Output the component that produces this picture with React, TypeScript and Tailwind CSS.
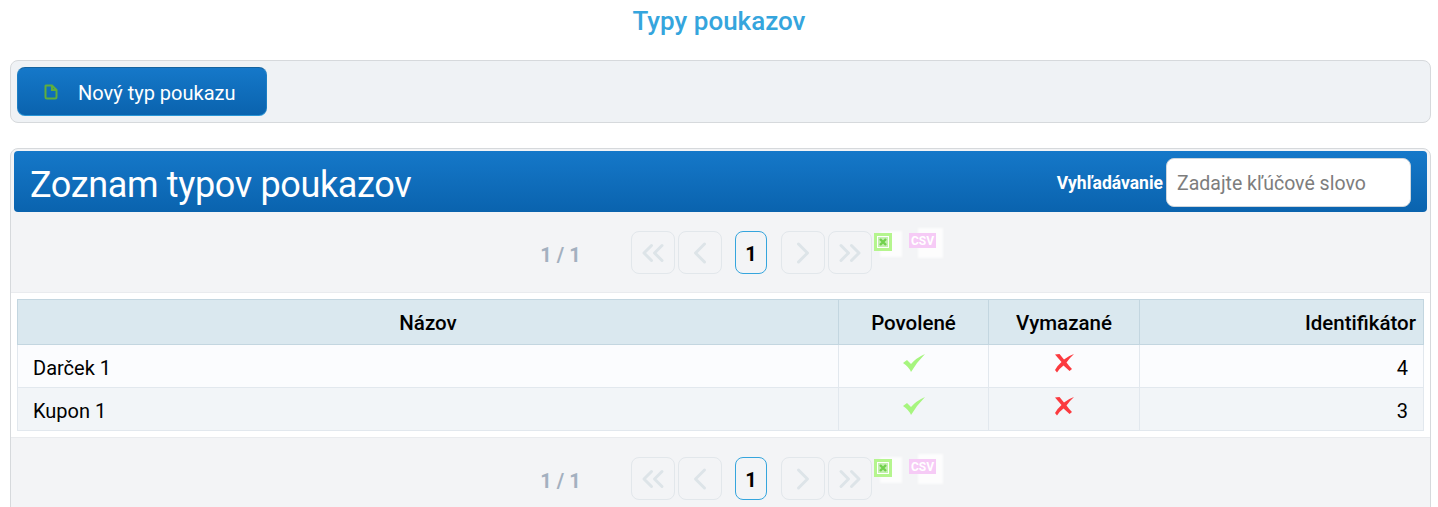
import { ChevronLeft, ChevronRight, ChevronsLeft, ChevronsRight } from "lucide-react";

function PagerButton({ children }: { children: React.ReactNode }) {
  return (
    <div className="flex h-[43px] w-[44px] items-center justify-center rounded-lg border border-[#e2e7eb] text-[#dde4e8]">
      {children}
    </div>
  );
}

function Pager() {
  return (
    <div className="flex h-[43px] items-start">
      <div className="ml-[516px] flex h-[43px] w-[61px] items-center justify-center pt-1 text-[20px] font-bold text-[#a3b0bf]">
        1 / 1
      </div>
      <div className="ml-[40px] flex gap-[3px]">
        <PagerButton><ChevronsLeft size={36} strokeWidth={2} /></PagerButton>
        <PagerButton><ChevronLeft size={36} strokeWidth={2} /></PagerButton>
      </div>
      <div className="ml-[13px] flex h-[43px] w-[32px] items-center justify-center rounded-lg border border-[#35a5dd] pt-0.5 text-[20px] font-bold text-black">
        1
      </div>
      <div className="ml-[14px] flex gap-[3px]">
        <PagerButton><ChevronRight size={36} strokeWidth={2} /></PagerButton>
        <PagerButton><ChevronsRight size={36} strokeWidth={2} /></PagerButton>
      </div>
      {/* export icons */}
      <div className="relative h-[30px] w-[72px]">
        <div className="absolute left-[8px] top-0 h-[26px] w-[22px] bg-white/80 blur-[1px]" />
        <div className="absolute left-[46px] top-[-3px] h-[30px] w-[25px] bg-white/80 blur-[1px]" />
        <div className="absolute left-[2px] top-[2px] flex h-[18px] w-[18px] items-center justify-center border-[3px] border-[#b5f58e] bg-white">
          <svg width="10" height="10" viewBox="0 0 10 10" className="blur-[0.4px]">
            <rect width="10" height="10" fill="#c4efb0" />
            <path d="M2 2 L8 8 M8 2 L2 8" stroke="#72d14e" strokeWidth="2.4" />
          </svg>
        </div>
        <div className="absolute left-[37px] top-[2px] flex h-[15px] w-[27px] items-center justify-center bg-[#f6cbf6] text-[12px] font-bold leading-none text-white">
          CSV
        </div>
      </div>
    </div>
  );
}

function Check() {
  return (
    <svg width="22" height="18" viewBox="0 0 22 18" className="blur-[0.5px]">
      <path d="M0 9 L4 6 L8 10 Q13 4 22 0 Q14 8 8 18 Q6 13 0 9 Z" fill="#a6f57e" />
    </svg>
  );
}

function Cross() {
  return (
    <svg width="20" height="20" viewBox="0 0 20 20" className="blur-[0.5px]">
      <path d="M1 1.5 L5.5 1 L10 6.5 Q14 3 20 1 Q15 5.5 12.5 9.5 Q15 13 18 16 L15.5 18 L9.5 12.5 Q6 15 3 19.5 L1 17 Q4 12 7.5 9 Q4 5 1 1.5 Z" fill="#fb3a3f" />
    </svg>
  );
}

const rows = [
  { name: "Darček 1", id: 4 },
  { name: "Kupon 1", id: 3 },
];

export default function App() {
  return (
    <main className="h-[507px] overflow-hidden bg-white font-['Roboto',sans-serif] text-black">
      <h1 className="flex h-[42px] items-center justify-center text-[26px] font-medium text-[#35a5dd]">
        Typy poukazov
      </h1>

      <div className="ml-[10px] mr-[7px] mt-[18px] h-[63px] rounded-lg border border-[#d6d9dc] bg-[#eff2f5] p-[6px]">
        <button className="flex h-[49px] w-[250px] items-center rounded-lg border border-[#1c7fc4] border-t-[#14639f] border-b-[#2a96d6] bg-gradient-to-b from-[#1578c9] to-[#0a63ae] pl-[26px] text-[20px] text-white">
          <svg width="14" height="16" viewBox="0 0 14 16" fill="none" stroke="#5fae3d" strokeWidth="2">
            <path d="M2 1.5 H8 L12.5 6 V13 Q12.5 14.5 11 14.5 H3 Q1.5 14.5 1.5 13 V2 Z" />
            <path d="M8 1.5 V6 H12.5" />
          </svg>
          <span className="ml-[20px] mt-[2px]">Nový typ poukazu</span>
        </button>
      </div>

      <section className="ml-[10px] mr-[7px] mt-[25px] rounded-t-lg border border-[#d6d9dc] bg-[#f3f4f6] px-[3px] pb-[30px] pt-[2px]">
        <div className="flex h-[61px] items-center rounded-[4px] bg-gradient-to-b from-[#1578c9] to-[#0a63ae] pl-[16px] pr-[16px] text-white">
          <h2 className="mt-[6px] text-[36px] leading-none tracking-[-0.35px]">Zoznam typov poukazov</h2>
          <span className="ml-auto mt-1 text-[17.5px] font-bold">Vyhľadávanie</span>
          <div className="ml-[3px] mt-[2px] flex h-[49px] w-[245px] items-center rounded-lg border border-[#cfd6dc] bg-white pl-[10px] pt-[3px] text-[19.5px] text-[#7d7d7d]">
            Zadajte kľúčové slovo
          </div>
        </div>

        <div className="pt-[19px]">
          <Pager />
        </div>

        <div className="-mx-[3px] mt-[18px] border-y border-[#e9ebee] bg-white px-[6px] py-[6px]">
          <table className="w-full table-fixed border-collapse border border-[#e2e8ee]">
            <colgroup>
              <col className="w-[821px]" />
              <col className="w-[150px]" />
              <col className="w-[151px]" />
              <col />
            </colgroup>
            <thead>
              <tr className="h-[45px] bg-[#dae8ef] text-[20.5px]">
                <th className="border border-[#c3d6e0] pt-[2px] font-medium">Názov</th>
                <th className="border border-[#c3d6e0] pt-[2px] font-medium">Povolené</th>
                <th className="border border-[#c3d6e0] pt-[2px] font-medium">Vymazané</th>
                <th className="border border-[#c3d6e0] pr-[7px] pt-[2px] text-right font-medium">Identifikátor</th>
              </tr>
            </thead>
            <tbody className="text-[20px]">
              {rows.map((row, i) => (
                <tr key={row.id} className={i % 2 ? "h-[43px] bg-[#f2f5f8]" : "h-[43px] bg-[#fbfcfe]"}>
                  <td className="border border-[#e2e8ee] pl-[15px] pt-[4px]">{row.name}</td>
                  <td className="border border-[#e2e8ee] pb-[6px]"><div className="flex justify-center"><Check /></div></td>
                  <td className="border border-[#e2e8ee] pb-[6px]"><div className="flex justify-center"><Cross /></div></td>
                  <td className="border border-[#e2e8ee] pr-[15px] pt-[4px] text-right">{row.id}</td>
                </tr>
              ))}
            </tbody>
          </table>
        </div>

        <div className="pt-[19px]">
          <Pager />
        </div>
      </section>
    </main>
  );
}
